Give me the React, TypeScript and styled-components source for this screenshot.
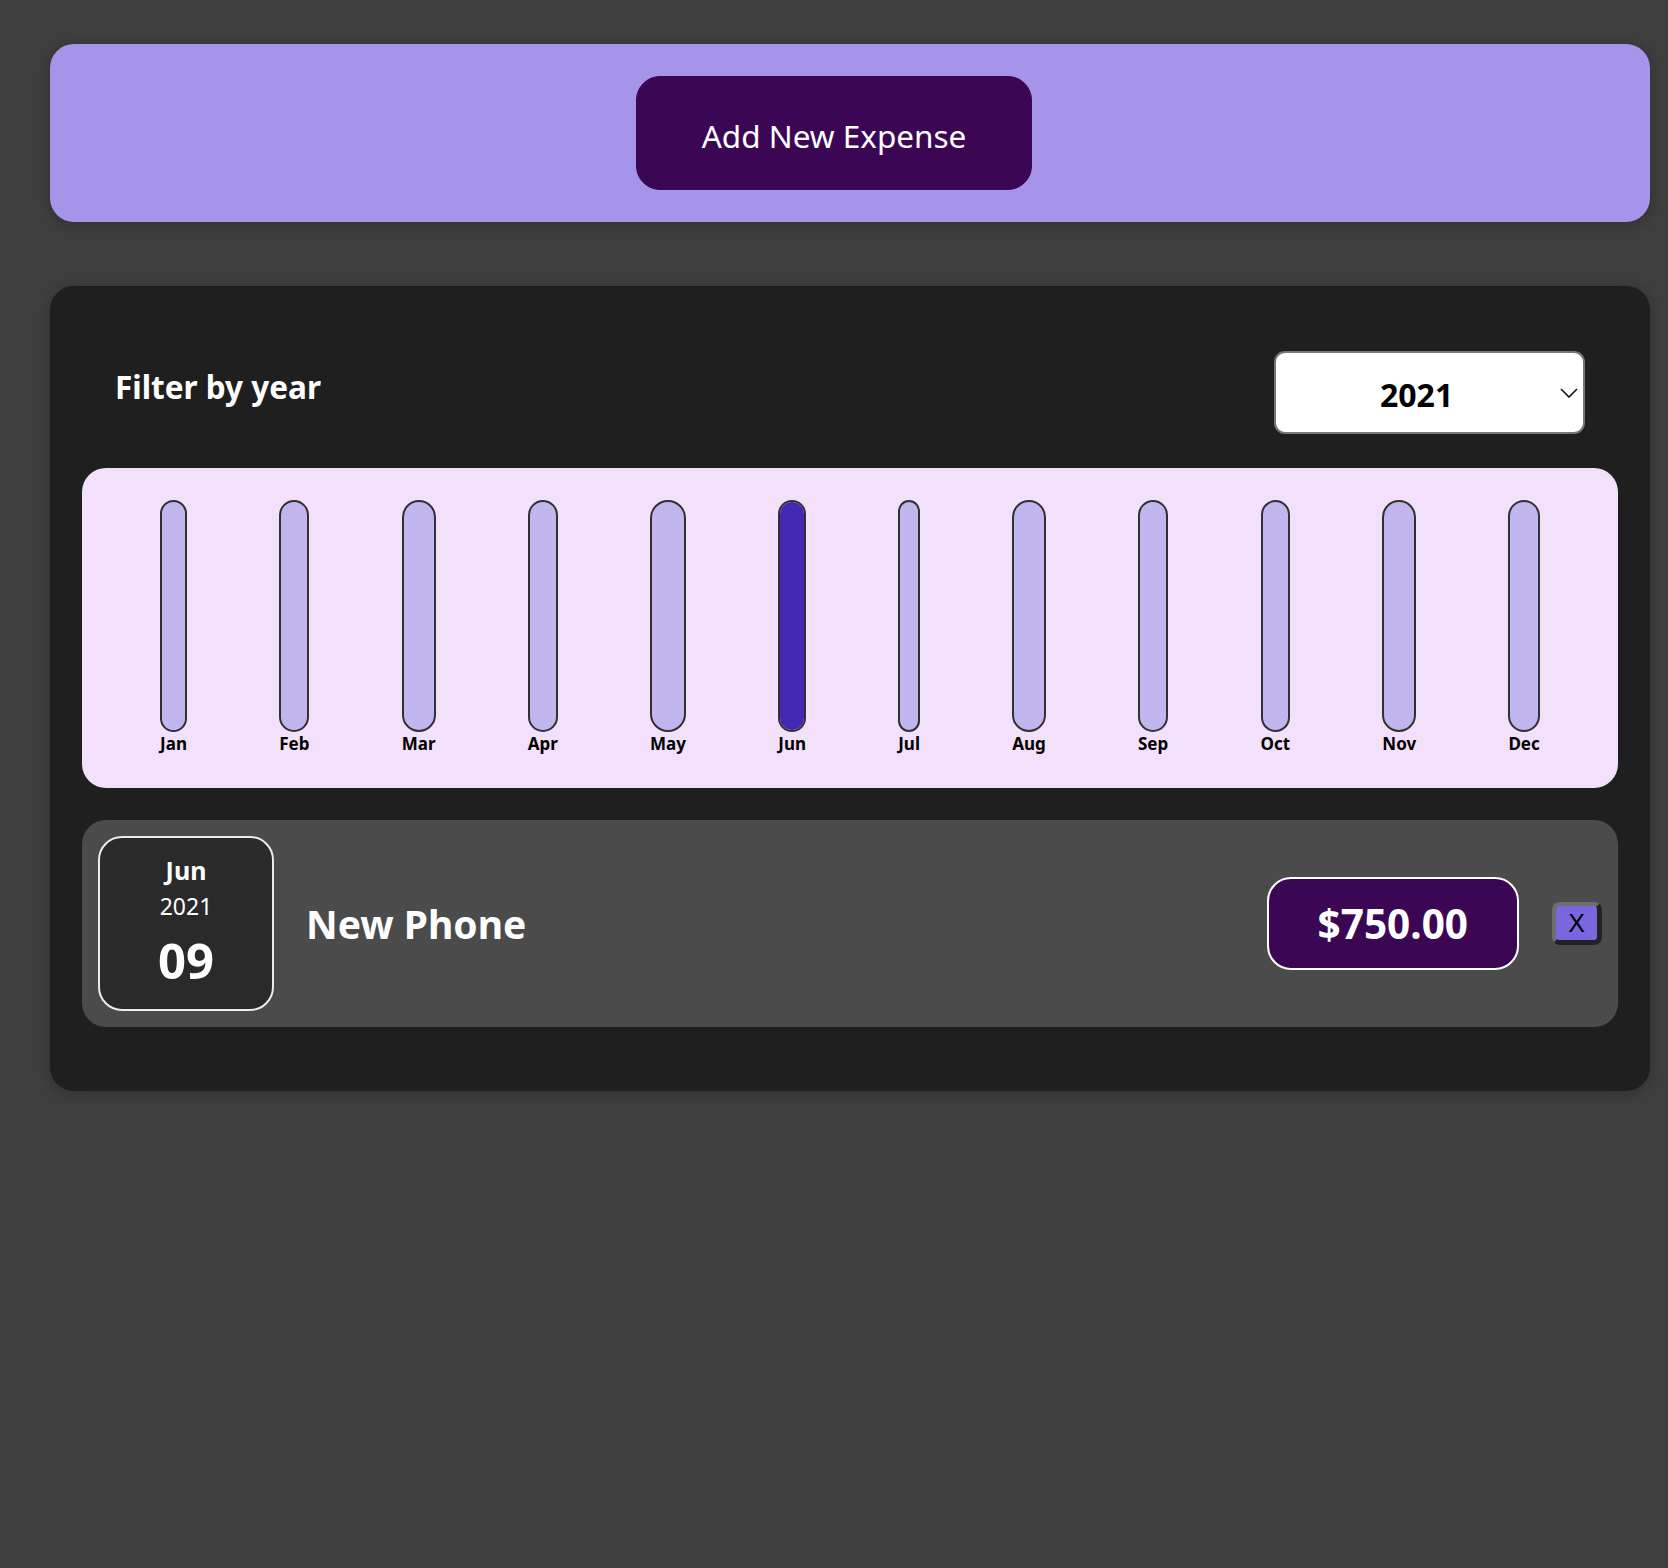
import styled, { createGlobalStyle } from "styled-components";

const GlobalStyle = createGlobalStyle`
    * {
        box-sizing: border-box;
    }
    body {
        margin: 0;
        background-color: #3f3f3f;
        font-family: "Noto Sans", "Open Sans", sans-serif;
    }
`

const months = ["Jan", "Feb", "Mar", "Apr", "May", "Jun", "Jul", "Aug", "Sep", "Oct", "Nov", "Dec"];
const values = [0, 0, 0, 0, 0, 750, 0, 0, 0, 0, 0, 0];

const App = () => {
    const max = Math.max(...values);
    return (
        <Page>
            <GlobalStyle />
            <NewExpense>
                <AddButton>Add New Expense</AddButton>
            </NewExpense>
            <Expenses>
                <FilterRow>
                    <FilterLabel>Filter by year</FilterLabel>
                    <SelectWrap>
                        <YearSelect defaultValue="2021">
                            <option value="2022">2022</option>
                            <option value="2021">2021</option>
                            <option value="2020">2020</option>
                            <option value="2019">2019</option>
                        </YearSelect>
                        <Chevron width="18" height="10" viewBox="0 0 18 10">
                            <polyline points="1,1 9,9 17,1" fill="none" stroke="#111" strokeWidth="1.6" />
                        </Chevron>
                    </SelectWrap>
                </FilterRow>
                <Chart>
                    {months.map((m, i) => (
                        <ChartBar key={m}>
                            <BarInner>
                                <BarFill style={{ height: max ? `${(values[i] / max) * 100}%` : "0%" }} />
                            </BarInner>
                            <BarLabel>{m}</BarLabel>
                        </ChartBar>
                    ))}
                </Chart>
                <ExpenseItem>
                    <DateBox>
                        <DateMonth>Jun</DateMonth>
                        <DateYear>2021</DateYear>
                        <DateDay>09</DateDay>
                    </DateBox>
                    <Title>New Phone</Title>
                    <Price>$750.00</Price>
                    <DeleteButton>X</DeleteButton>
                </ExpenseItem>
            </Expenses>
        </Page>
    )
}

export default App;


const Page = styled.div`
    min-height: 1568px;
    padding: 44px 18px 40px 50px;
`

const NewExpense = styled.div`
    background-color: #a594ea;
    border-radius: 24px;
    padding: 32px;
    display: flex;
    justify-content: center;
    box-shadow: 0 2px 16px rgba(0, 0, 0, 0.25);
`

const AddButton = styled.button`
    font-family: "Noto Sans", sans-serif;
    font-size: 31.5px;
    line-height: 48px;
    color: white;
    background-color: #3b0755;
    border: 1px solid #3b0755;
    border-radius: 24px;
    padding: 35px 40px 29px;
    margin-right: 32px;
    width: 396px;
    cursor: pointer;
`

const Expenses = styled.div`
    margin-top: 64px;
    background-color: #1f1f1f;
    border-radius: 24px;
    padding: 32px;
    box-shadow: 0 2px 16px rgba(0, 0, 0, 0.25);
`

const FilterRow = styled.div`
    display: flex;
    align-items: center;
    justify-content: space-between;
    margin: 33px 0 34px;
    padding: 0 33px;
`

const FilterLabel = styled.label`
    color: white;
    font-weight: bold;
    font-size: 31.5px;
    margin-top: -12px;
`

const SelectWrap = styled.div`
    position: relative;
    width: 311px;
    height: 83px;
`

const YearSelect = styled.select`
    appearance: none;
    width: 100%;
    height: 100%;
    font-family: "Noto Sans", sans-serif;
    font-size: 32px;
    font-weight: bold;
    color: #000;
    background-color: #fff;
    border: 2px solid #777;
    border-radius: 11px;
    padding: 4px 0 0 104px;
`

const Chevron = styled.svg`
    position: absolute;
    right: 7px;
    top: 37px;
    pointer-events: none;
`

const Chart = styled.div`
    height: 320px;
    background-color: #f3e0fb;
    border-radius: 24px;
    padding: 32px;
    display: flex;
    justify-content: space-around;
`

const ChartBar = styled.div`
    height: 100%;
    display: flex;
    flex-direction: column;
    align-items: center;
`

const BarInner = styled.div`
    flex: 1;
    width: 100%;
    border: 2px solid #313131;
    border-radius: 24px;
    background-color: #c2b6ef;
    overflow: hidden;
    display: flex;
    flex-direction: column;
    justify-content: flex-end;
`

const BarFill = styled.div`
    width: 100%;
    background-color: #4329b1;
`

const BarLabel = styled.div`
    font-weight: bold;
    font-size: 17px;
    line-height: 24px;
    color: #000;
    text-align: center;
`

const ExpenseItem = styled.div`
    display: flex;
    align-items: center;
    background-color: #4b4b4b;
    border-radius: 24px;
    padding: 16px;
    margin: 32px 0;
`

const DateBox = styled.div`
    width: 176px;
    height: 175px;
    flex-shrink: 0;
    display: flex;
    flex-direction: column;
    align-items: center;
    justify-content: center;
    border: 2px solid #ececec;
    background-color: #2a2a2a;
    border-radius: 24px;
    color: white;
`

const DateMonth = styled.div`
    font-size: 25px;
    font-weight: bold;
    line-height: 36px;
`

const DateYear = styled.div`
    font-size: 23px;
    line-height: 36px;
`

const DateDay = styled.div`
    font-size: 49px;
    font-weight: bold;
    line-height: 72px;
`

const Title = styled.h2`
    flex: 1;
    margin: 0 32px;
    color: white;
    font-size: 39px;
    font-weight: bold;
`

const Price = styled.div`
    font-size: 40.5px;
    font-weight: bold;
    line-height: 49px;
    color: white;
    background-color: #3b0755;
    border: 2px solid white;
    border-radius: 24px;
    padding: 20px 49px;
`

const DeleteButton = styled.button`
    margin-left: 33px;
    font-family: "Liberation Sans", Arial, sans-serif;
    font-size: 25px;
    line-height: 29px;
    color: #000;
    background-color: #7c66e0;
    border-style: solid;
    border-width: 4px 5px 5px 4px;
    border-color: #6e6e6e #222 #222 #6e6e6e;
    border-radius: 8px;
    padding: 2px 10px;
    width: 50px;
    height: 43px;
    cursor: pointer;
`
